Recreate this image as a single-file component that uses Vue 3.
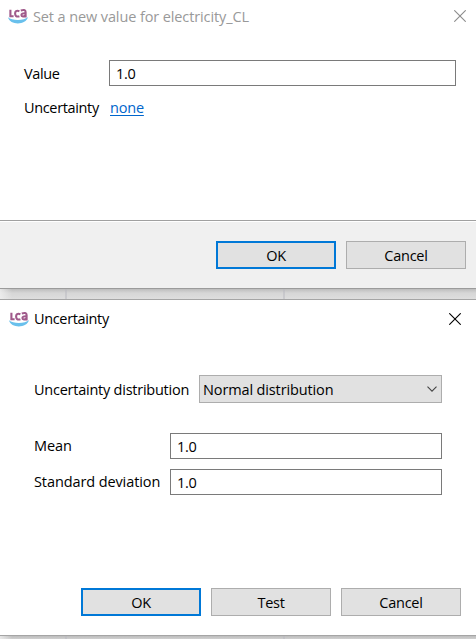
<script setup>
import { ref } from 'vue'

const value = ref('1.0')
const distribution = ref('Normal distribution')
const parameters = ref([
  { label: 'Mean', value: '1.0' },
  { label: 'Standard deviation', value: '1.0' },
])
</script>

<template>
  <main class="screen">
    <section class="dialog value-dialog">
      <header class="titlebar">
        <svg class="logo" viewBox="0 0 20 16" width="20" height="16">
          <g fill="none" stroke="#a05a8b" stroke-width="2.1">
            <path d="M2.4 1.8V8.3H5.6" />
            <path d="M11.4 3.2C8.4 2 7.1 3.4 7.1 5.6S8.4 9.2 11.4 8.2" />
            <path d="M12.8 2.4C15.4 1.6 17.6 1.7 17.6 3.9V9.6M17.4 5.3C14.6 5.1 13.4 5.7 13.4 7.1C13.4 8.9 16 8.8 17.4 7.2" />
          </g>
          <path d="M0 9.2C4 12.8 16 12.8 20 9C18 17.4 2 17.6 0 9.2Z" fill="#69c0ec" />
        </svg>
        <h1 class="title muted">Set a new value for electricity_CL</h1>
        <svg class="close faded" viewBox="0 0 12 12" width="12" height="12"><path d="M.3 .3L11.7 11.7M11.7 .3L.3 11.7" /></svg>
      </header>
      <div class="body value-body">
        <div class="row">
          <span class="label lowered">Value</span>
          <div class="field">{{ value }}</div>
        </div>
        <div class="row link-row">
          <span class="label">Uncertainty</span>
          <a class="link">none</a>
        </div>
      </div>
      <footer class="actions bar">
        <button class="button primary">OK</button>
        <button class="button">Cancel</button>
      </footer>
    </section>

    <div class="backdrop gap"></div>

    <section class="dialog uncertainty-dialog">
      <header class="titlebar second">
        <svg class="logo" viewBox="0 0 20 16" width="20" height="16">
          <g fill="none" stroke="#a05a8b" stroke-width="2.1">
            <path d="M2.4 1.8V8.3H5.6" />
            <path d="M11.4 3.2C8.4 2 7.1 3.4 7.1 5.6S8.4 9.2 11.4 8.2" />
            <path d="M12.8 2.4C15.4 1.6 17.6 1.7 17.6 3.9V9.6M17.4 5.3C14.6 5.1 13.4 5.7 13.4 7.1C13.4 8.9 16 8.8 17.4 7.2" />
          </g>
          <path d="M0 9.2C4 12.8 16 12.8 20 9C18 17.4 2 17.6 0 9.2Z" fill="#69c0ec" />
        </svg>
        <h1 class="title">Uncertainty</h1>
        <svg class="close" viewBox="0 0 12 12" width="12" height="12"><path d="M.3 .3L11.7 11.7M11.7 .3L.3 11.7" /></svg>
      </header>
      <div class="body uncertainty-body">
        <div class="row select-row">
          <span class="label wide lowered">Uncertainty distribution</span>
          <div class="select">
            <span class="choice">{{ distribution }}</span>
            <svg viewBox="0 0 10 6" width="10" height="6"><path d="M.5 .6L5 5.1L9.5 .6" /></svg>
          </div>
        </div>
        <div v-for="p in parameters" :key="p.label" class="row param">
          <span class="label medium">{{ p.label }}</span>
          <div class="field">{{ p.value }}</div>
        </div>
      </div>
      <footer class="actions plain">
        <button class="button primary">OK</button>
        <button class="button">Test</button>
        <button class="button">Cancel</button>
      </footer>
    </section>

    <div class="backdrop tail"></div>
  </main>
</template>

<style>
body { background: #fff; overflow: hidden; }
</style>

<style scoped>
* { box-sizing: border-box; }
.screen {
  width: 476px;
  height: 639px;
  display: flex;
  flex-direction: column;
  overflow: hidden;
  font-family: "Open Sans", "Noto Sans", sans-serif;
  font-size: 14.5px;
  line-height: 20px;
  letter-spacing: -0.35px;
  color: #000;
}
.dialog { display: flex; flex-direction: column; background: #fff; flex: none; }
.value-dialog { height: 289px; border-bottom: 1px solid #9b9b9b; }
.uncertainty-dialog { height: 337px; border-top: 1px solid #a5a5a5; border-bottom: 1px solid #a5a5a5; }
.titlebar { display: flex; align-items: center; height: 34px; padding: 0 10px 2px 8px; flex: none; }
.titlebar.second { height: 38px; padding: 0 15px 1px 9px; }
.logo { flex: none; }
.title { margin: 0 0 0 5px; font: inherit; white-space: nowrap; }
.muted { color: #999; letter-spacing: -0.11px; padding-top: 1px; }
.close { margin-left: auto; flex: none; }
.close path { fill: none; stroke: #000; stroke-width: 1.1; }
.close.faded path { stroke: #8c8c8c; }
.body { flex: 1; display: flex; flex-direction: column; }
.value-body { padding: 26px 20px 0 24px; }
.row { display: flex; align-items: center; white-space: nowrap; flex: none; }
.label { width: 85px; flex: none; }
.lowered { padding-top: 2px; }
.link-row { height: 20px; margin-top: 12px; }
.link { margin-left: 1px; color: #0066cc; letter-spacing: -0.2px; text-decoration: underline; text-underline-offset: 2px; }
.field { flex: 1; height: 26px; padding: 3px 6px; border: 1px solid #7a7a7a; background: #fff; }
.bar { height: 68px; background: #f0f0f0; border-top: 1px solid #a0a0a0; box-shadow: inset 0 1px #fff; padding: 20px 10px 0; }
.actions { display: flex; justify-content: flex-end; gap: 10px; flex: none; }
.button {
  width: 120px;
  height: 28px;
  padding: 1px 0 0;
  border: 1px solid #adadad;
  border-radius: 0;
  background: #e1e1e1;
  font: inherit;
  letter-spacing: -0.25px;
  color: #000;
}
.primary { border: 2px solid #0078d7; }
.backdrop {
  flex: none;
  background:
    linear-gradient(90deg, rgba(240, 240, 240, .8), rgba(240, 240, 240, 0) 12px),
    linear-gradient(rgba(185, 185, 192, .5), rgba(185, 185, 192, .5)) 65px 0 / 2px 100% no-repeat,
    linear-gradient(rgba(185, 185, 192, .5), rgba(185, 185, 192, .5)) 283px 0 / 2px 100% no-repeat,
    linear-gradient(#bdbdbd, #d6d6d6 4px, #dedede);
}
.gap { height: 10px; }
.tail { height: 3px; }
.uncertainty-body { padding: 37px 34px 0; }
.select-row { margin-bottom: 30px; }
.label.wide { width: 165px; letter-spacing: -0.24px; }
.label.medium { width: 136px; letter-spacing: -0.1px; }
.param { margin-bottom: 10px; }
.select {
  flex: 1;
  height: 28px;
  display: flex;
  align-items: center;
  justify-content: space-between;
  padding: 0 4px 0 3px;
  border: 1px solid #adadad;
  background: #e1e1e1;
}
.choice { padding-top: 2px; letter-spacing: -0.13px; }
.select path { fill: none; stroke: #444; stroke-width: 1.1; }
.plain { padding: 0 15px 19px; }
</style>
